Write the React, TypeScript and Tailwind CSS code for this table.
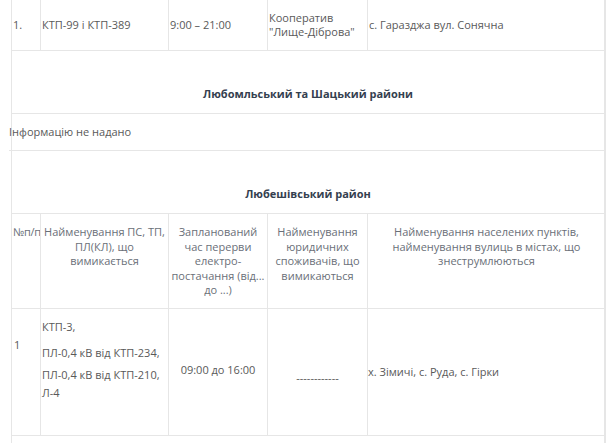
const cols = "grid grid-cols-[28px_128px_99px_100px_238px]";

function Cell({
  first,
  className = "",
  children,
}: {
  first?: boolean;
  className?: string;
  children?: React.ReactNode;
}) {
  return (
    <div
      className={`${first ? "" : "border-l border-[#e6e6e6]"} ${className}`}
    >
      {children}
    </div>
  );
}

function SectionTitle({ children }: { children: React.ReactNode }) {
  return (
    <div className="h-[63px] border-b border-[#e6e6e6] flex items-end justify-center pb-[11px]">
      <strong className="font-bold text-[#34404f] leading-4">{children}</strong>
    </div>
  );
}

export default function App() {
  return (
    <div
      className="bg-white min-h-[443px] w-[610px] overflow-hidden text-[11px] text-[#595959]"
      style={{ fontFamily: '"Open Sans", "Noto Sans", sans-serif' }}
    >
      <div className="ml-[11px] w-[595px] border-l border-r-2 border-[#e6e6e6]">
        {/* row from the previous district */}
        <div className={`${cols} h-[51px] border-b border-[#e6e6e6] leading-[14px]`}>
          <Cell first className="flex items-center pl-px">1.</Cell>
          <Cell className="flex items-center pl-px">КТП-99 і КТП-389</Cell>
          <Cell className="flex items-center pl-px">9:00 – 21:00</Cell>
          <Cell className="flex items-center pl-px">
            Кооператив
            <br />
            "Лище-Діброва"
          </Cell>
          <Cell className="flex items-center pl-px">с. Гаразджа вул. Сонячна</Cell>
        </div>

        <SectionTitle>Любомльський та Шацький райони</SectionTitle>

        <div className="h-[37px] border-b border-[#e6e6e6] flex items-center -ml-[3px]">
          Інформацію не надано
        </div>

        <SectionTitle>Любешівський район</SectionTitle>

        {/* table head */}
        <div className={`${cols} h-[95px] border-b border-[#e6e6e6] leading-[14.5px] text-[#6a6f78] whitespace-nowrap`}>
          <Cell first className="pt-[11px] pl-px tracking-[-0.3px]">№п/п</Cell>
          <Cell className="pt-[11px] text-center">
            Найменування ПС, ТП,
            <br />
            ПЛ(КЛ), що
            <br />
            вимикається
          </Cell>
          <Cell className="pt-[11px] text-center">
            Запланований
            <br />
            час перерви
            <br />
            електро-
            <br />
            постачання (від...
            <br />
            до ...)
          </Cell>
          <Cell className="pt-[11px] text-center">
            Найменування
            <br />
            юридичних
            <br />
            споживачів, що
            <br />
            вимикаються
          </Cell>
          <Cell className="pt-[11px] text-center">
            Найменування населених пунктів,
            <br />
            найменування вулиць в містах, що
            <br />
            знеструмлюються
          </Cell>
        </div>

        {/* data row */}
        <div className={`${cols} h-[127px] border-b border-[#e6e6e6]`}>
          <Cell first className="pl-[2px] pt-[28px] leading-4">1</Cell>
          <Cell className="pl-px pt-[9px] leading-[18px]">
            <p className="mb-[8px]">КТП-3,</p>
            <p className="mb-[4px]">ПЛ-0,4 кВ від КТП-234,</p>
            <p>
              ПЛ-0,4 кВ від КТП-210,
              <br />
              Л-4
            </p>
          </Cell>
          <Cell className="flex items-center justify-center leading-4 pb-[4px]">
            09:00 до 16:00
          </Cell>
          <Cell className="flex items-center justify-center leading-4 pt-[12px]">
            ------------
          </Cell>
          <Cell className="flex items-center leading-4">х. Зімичі, с. Руда, с. Гірки</Cell>
        </div>

        <div className="h-[20px]" />
      </div>
    </div>
  );
}
